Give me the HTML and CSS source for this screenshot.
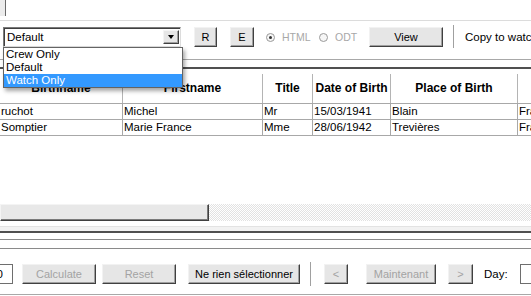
FILE: index.html
```html
<!DOCTYPE html>
<html>
	<head>
		<meta charset="utf-8">
		<title>Crew list</title>
		<link rel="stylesheet" href="styles.css">
	</head>
	<body>
		<div id="app">
			<div class="tabs"><span class="tab"></span></div>
			<div class="toolbar">
				<div class="combo">
					<span class="combo-text">Default</span>
					<span class="combo-btn"><span class="arrow"></span></span>
					<ul class="combo-list">
						<li>Crew Only</li>
						<li>Default</li>
						<li class="sel">Watch Only</li>
					</ul>
				</div>
				<button class="btn btn-r">R</button>
				<button class="btn btn-e">E</button>
				<label class="opt opt-html"><span class="radio on"></span>HTML</label>
				<label class="opt opt-odt"><span class="radio"></span>ODT</label>
				<button class="btn btn-view">View</button>
				<span class="vsep"></span>
				<span class="caption">Copy to watch list</span>
			</div>
			<div class="spacer"></div>
			<div class="grid">
				<div class="row head">
					<div>Birthname</div>
					<div>Firstname</div>
					<div>Title</div>
					<div>Date of Birth</div>
					<div>Place of Birth</div>
					<div>Nationality</div>
				</div>
				<div class="row">
					<div>ruchot</div>
					<div>Michel</div>
					<div>Mr</div>
					<div>15/03/1941</div>
					<div>Blain</div>
					<div>France</div>
				</div>
				<div class="row">
					<div>Somptier</div>
					<div>Marie France</div>
					<div>Mme</div>
					<div>28/06/1942</div>
					<div>Trevières</div>
					<div>France</div>
				</div>
			</div>
			<div class="hscroll"><span class="thumb"></span></div>
			<div class="pane-foot"></div>
			<div class="rule rule-1"></div>
			<div class="rule rule-2"></div>
			<div class="bottombar">
				<input class="field field-num" type="text" value="0">
				<button class="btn btn-calc" disabled>Calculate</button>
				<button class="btn btn-reset" disabled>Reset</button>
				<button class="btn btn-none">Ne rien sélectionner</button>
				<span class="vsep vsep-low"></span>
				<button class="btn btn-prev" disabled>&lt;</button>
				<button class="btn btn-now" disabled>Maintenant</button>
				<button class="btn btn-next" disabled>&gt;</button>
				<span class="caption caption-day">Day:</span>
				<input class="field field-day" type="text" value="">
			</div>
		</div>
	</body>
</html>
```

FILE: styles.css
```css
html, body {margin:0;padding:0;background:#fff;}
body {font-family:"Liberation Sans", Arial, sans-serif;font-size:11.5px;color:#000;}
#app {width:531px;height:296px;overflow:hidden;}

/* top strip */
.tabs {height:20px;border-bottom:1px solid #dcdcdc;}
.tab {display:block;width:5px;height:16px;background:#ececec;border-right:1px solid #6a6a6a;}

/* toolbar */
.toolbar {display:flex;align-items:flex-start;height:32px;padding-top:6px;border-bottom:1px solid #a8a8a8;white-space:nowrap;}
.toolbar > * {flex-shrink:0;}

.combo {position:relative;width:178px;height:20px;margin-left:3px;box-sizing:border-box;background:#fff;border:1px solid;border-color:#7a7a7a #dcdcdc #dcdcdc #7a7a7a;box-shadow:inset 1px 1px #404040;display:flex;}
.combo-text {flex:1;line-height:18px;padding-left:3px;}
.combo-btn {width:16px;height:14px;margin:2px 1px 0 0;box-sizing:border-box;background:#e6e6e6;border:1px solid;border-color:#f4f4f4 #404040 #404040 #f4f4f4;box-shadow:inset -1px -1px #a0a0a0;display:flex;align-items:center;justify-content:center;}
.arrow {width:0;height:0;border-left:3.5px solid transparent;border-right:3.5px solid transparent;border-top:4px solid #000;}
.combo-list {position:absolute;left:-1px;top:19px;width:180px;margin:0;padding:0;list-style:none;box-sizing:border-box;background:#fff;border:1px solid #646464;box-shadow:2px 3px 4px rgba(0,0,0,0.35);z-index:5;}
.combo-list li {height:13px;line-height:13px;padding-left:2px;}
.combo-list li.sel {background:#3399ff;color:#fff;}

.btn {height:20px;box-sizing:border-box;padding:0;margin:0;font:inherit;font-size:11px;color:#000;background:#e6e6e6;border:1px solid;border-color:#f2f2f2 #404040 #404040 #f2f2f2;box-shadow:inset -1px -1px #a0a0a0;}
.btn:disabled {color:#a3a3a3;}
.btn-r {width:23px;margin-left:13px;}
.btn-e {width:24px;margin-left:13px;}
.btn-view {width:74px;}

.opt {display:flex;align-items:center;height:20px;color:#a8a8a8;font-size:10.5px;}
.opt-html {width:53px;margin-left:12px;}
.opt-odt {width:50px;}
.radio {position:relative;width:9px;height:9px;margin-right:7px;box-sizing:border-box;border:1px solid #9a9a9a;border-radius:50%;background:#f6f6f6;}
.radio.on::after {content:"";position:absolute;left:2px;top:2px;width:3px;height:3px;border-radius:50%;background:#333;}

.vsep {width:1px;height:23px;margin:-2px 0 0 10px;background:#a0a0a0;border-right:1px solid #fff;}
.caption {line-height:20px;margin-left:10px;}

/* grid */
.spacer {height:7px;}
.grid {height:130px;padding-top:5px;border-top:2px solid #505050;overflow:hidden;}
.row {display:grid;grid-template-columns:123px 140px 50px 78px 127px 120px;height:16px;border-bottom:1px solid #a8a8a8;box-sizing:border-box;white-space:nowrap;}
.row > div {border-right:1px solid #a8a8a8;padding-left:1px;line-height:15px;overflow:hidden;}
.row.head {height:30px;}
.row.head > div {font-weight:bold;font-size:12px;text-align:center;line-height:29px;padding:0;border-right-color:#b4b4b4;}

.hscroll {height:17px;display:flex;background:repeating-conic-gradient(#e2e2e2 0 25%, #fff 0 50%) 0 0/2px 2px;}
.thumb {width:209px;height:17px;box-sizing:border-box;background:#e8e8e8;border:1px solid;border-color:#f4f4f4 #404040 #404040 #f4f4f4;box-shadow:inset -1px -1px #7a7a7a;}

.pane-foot {height:7px;margin-top:5px;border-top:1px solid #e3e3e3;background:#f2f2f2;border-bottom:2px solid #505050;box-sizing:border-box;}
.rule {border-bottom:1px solid #8a8a8a;}
.rule-1 {height:6px;}
.rule-2 {height:8px;}

/* bottom bar */
.bottombar {display:flex;align-items:flex-start;height:30px;padding-top:15px;border-bottom:1px solid #a8a8a8;white-space:nowrap;}
.bottombar > * {flex-shrink:0;}
.field {height:20px;box-sizing:border-box;margin:0;font:inherit;border:1px solid #6e6e6e;background:#fff;outline:none;}
.field-num {width:44px;margin-left:-31px;text-align:right;padding:0 9px 0 0;}
.btn-calc {width:74px;margin-left:9px;}
.btn-reset {width:74px;margin-left:6px;}
.btn-none {width:112px;margin-left:12px;}
.vsep-low {margin:-2px 0 0 10px;height:24px;}
.btn-prev {width:24px;margin-left:12px;}
.btn-now {width:70px;margin-left:18px;}
.btn-next {width:25px;margin-left:12px;}
.caption-day {width:36px;margin-left:11px;}
.field-day {width:30px;padding:0;}
```
